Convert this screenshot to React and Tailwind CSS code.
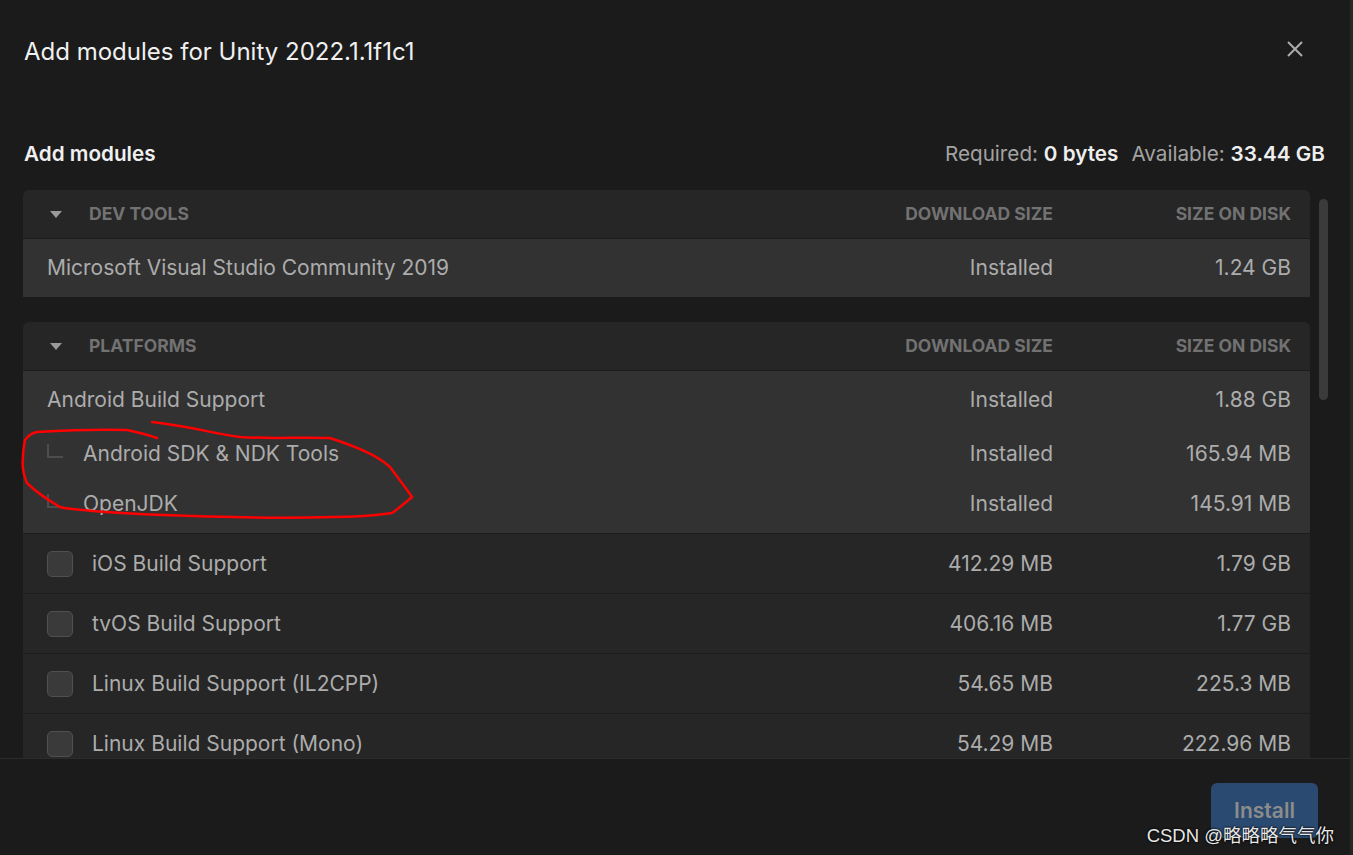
import React from "react";

const devTools = [{ name: "Microsoft Visual Studio Community 2019", dl: "Installed", disk: "1.24 GB" }];

const platforms = [
  { name: "iOS Build Support", dl: "412.29 MB", disk: "1.79 GB" },
  { name: "tvOS Build Support", dl: "406.16 MB", disk: "1.77 GB" },
  { name: "Linux Build Support (IL2CPP)", dl: "54.65 MB", disk: "225.3 MB" },
  { name: "Linux Build Support (Mono)", dl: "54.29 MB", disk: "222.96 MB" },
];

const GroupHeader = ({ title }) => (
  <div className="flex items-center h-[49px] pl-[27px] pr-[19px] bg-[#262626] rounded-t-[6px] border-b border-[#1c1c1c] text-[17.5px] font-bold text-[#727272]">
    <svg width="12" height="7" viewBox="0 0 12 7" className="mr-[27px]">
      <path d="M0 0 H12 L6 7 Z" fill="#9a9a9a" />
    </svg>
    <span className="flex-1">{title}</span>
    <span className="w-[200px] text-right">DOWNLOAD SIZE</span>
    <span className="w-[238px] text-right">SIZE ON DISK</span>
  </div>
);

const Cols = ({ dl, disk }) => (
  <>
    <span className="w-[200px] text-right">{dl}</span>
    <span className="w-[238px] text-right">{disk}</span>
  </>
);

const Corner = () => (
  <span className="w-[36px] flex items-center">
    <span className="block w-[16px] h-[14px] border-l-2 border-b-2 border-[#4d4d4d] -mt-[6px]" />
  </span>
);

export default function App() {
  return (
    <div
      className="relative w-full h-[855px] bg-[#1b1b1b] flex flex-col overflow-hidden border-r-[3px] border-[#262626]"
      style={{ fontFamily: "Inter, 'Noto Sans', sans-serif" }}
    >
      <div className="flex items-center justify-between pl-[24px] pr-[47px] pt-[37px]">
        <h1 className="text-[24px] leading-[30px] text-[#f0f0f0]">Add modules for Unity 2022.1.1f1c1</h1>
        <svg width="16" height="16" viewBox="0 0 16 16" className="-mt-[6px]">
          <path d="M1 1 L15 15 M15 1 L1 15" stroke="#ababab" strokeWidth="2" />
        </svg>
      </div>

      <div className="flex items-center justify-between pl-[24px] pr-[25px] mt-[73px] text-[20.7px] leading-[28px]">
        <span className="font-semibold text-[#f0f0f0]">Add modules</span>
        <span className="text-[#a3a3a3]">
          Required: <b className="font-semibold text-[#eeeeee]">0 bytes</b>
          <span className="ml-[13px]">Available: </span>
          <b className="font-semibold text-[#eeeeee]">33.44 GB</b>
        </span>
      </div>

      <div className="flex flex-1 min-h-0 mt-[22px] pl-[23px]">
        <div className="w-[1287px] overflow-hidden text-[21px] text-[#acacac]">
          <div>
            <GroupHeader title="DEV TOOLS" />
            {devTools.map((r) => (
              <div key={r.name} className="flex items-center h-[58px] pl-[24px] pr-[19px] bg-[#323232]">
                <span className="flex-1">{r.name}</span>
                <Cols dl={r.dl} disk={r.disk} />
              </div>
            ))}
          </div>

          <div className="mt-[25px]">
            <GroupHeader title="PLATFORMS" />
            <div className="bg-[#323232] pb-[4px] border-b border-[#1c1c1c]">
              <div className="flex items-center h-[58px] pl-[24px] pr-[19px]">
                <span className="flex-1">Android Build Support</span>
                <Cols dl="Installed" disk="1.88 GB" />
              </div>
              <div className="flex items-center h-[50px] pl-[24px] pr-[19px]">
                <Corner />
                <span className="flex-1">Android SDK &amp; NDK Tools</span>
                <Cols dl="Installed" disk="165.94 MB" />
              </div>
              <div className="flex items-center h-[50px] pl-[24px] pr-[19px]">
                <Corner />
                <span className="flex-1">OpenJDK</span>
                <Cols dl="Installed" disk="145.91 MB" />
              </div>
            </div>
            {platforms.map((r) => (
              <div key={r.name} className="flex items-center h-[60px] pl-[24px] pr-[19px] bg-[#262626] border-b border-[#1c1c1c]">
                <span className="w-[26px] h-[26px] rounded-[5px] bg-[#3a3a3a] border border-[#505050] mr-[19px]" />
                <span className="flex-1">{r.name}</span>
                <Cols dl={r.dl} disk={r.disk} />
              </div>
            ))}
          </div>
        </div>
        <div className="ml-[9px] pt-[9px]">
          <div className="w-[9px] h-[201px] rounded-full bg-[#3b3b3b]" />
        </div>
      </div>

      <div className="h-[97px] shrink-0 border-t border-[#2c2c2c] flex justify-end items-start pt-[24px] pr-[32px]">
        <button className="w-[107px] h-[55px] rounded-[6px] bg-[#2a4a71] text-[21px] font-semibold text-[#8c8c8c]">
          Install
        </button>
      </div>

      <svg className="absolute left-0 top-0 pointer-events-none" width="430" height="530">
        <path
          d="M152 422 C190 426 215 434 240 437 C270 439 300 437 330 438 C360 448 378 456 390 467 C398 478 406 488 412 497 C405 503 398 509 392 513 C372 516 352 517 333 517 C300 518 266 518 233 517 C180 516 120 514 83 510 C74 509 66 509 60 507 C48 500 36 492 27 483 C23 474 22 465 23 457 C23 450 24 445 25 440 C28 436 32 433 37 432 C70 430 100 429 127 430 C138 432 148 435 157 438"
          fill="none"
          stroke="#ff0000"
          strokeWidth="2.5"
          strokeLinecap="round"
        />
      </svg>

      <div
        className="absolute right-[16px] top-[822px] text-[18.5px] text-[#e8e8e8] [text-shadow:0_0_2px_#000,0_0_2px_#000]"
        style={{ fontFamily: "'Liberation Sans', 'Noto Sans CJK SC', sans-serif" }}
      >
        CSDN @略略略气气你
      </div>
    </div>
  );
}
